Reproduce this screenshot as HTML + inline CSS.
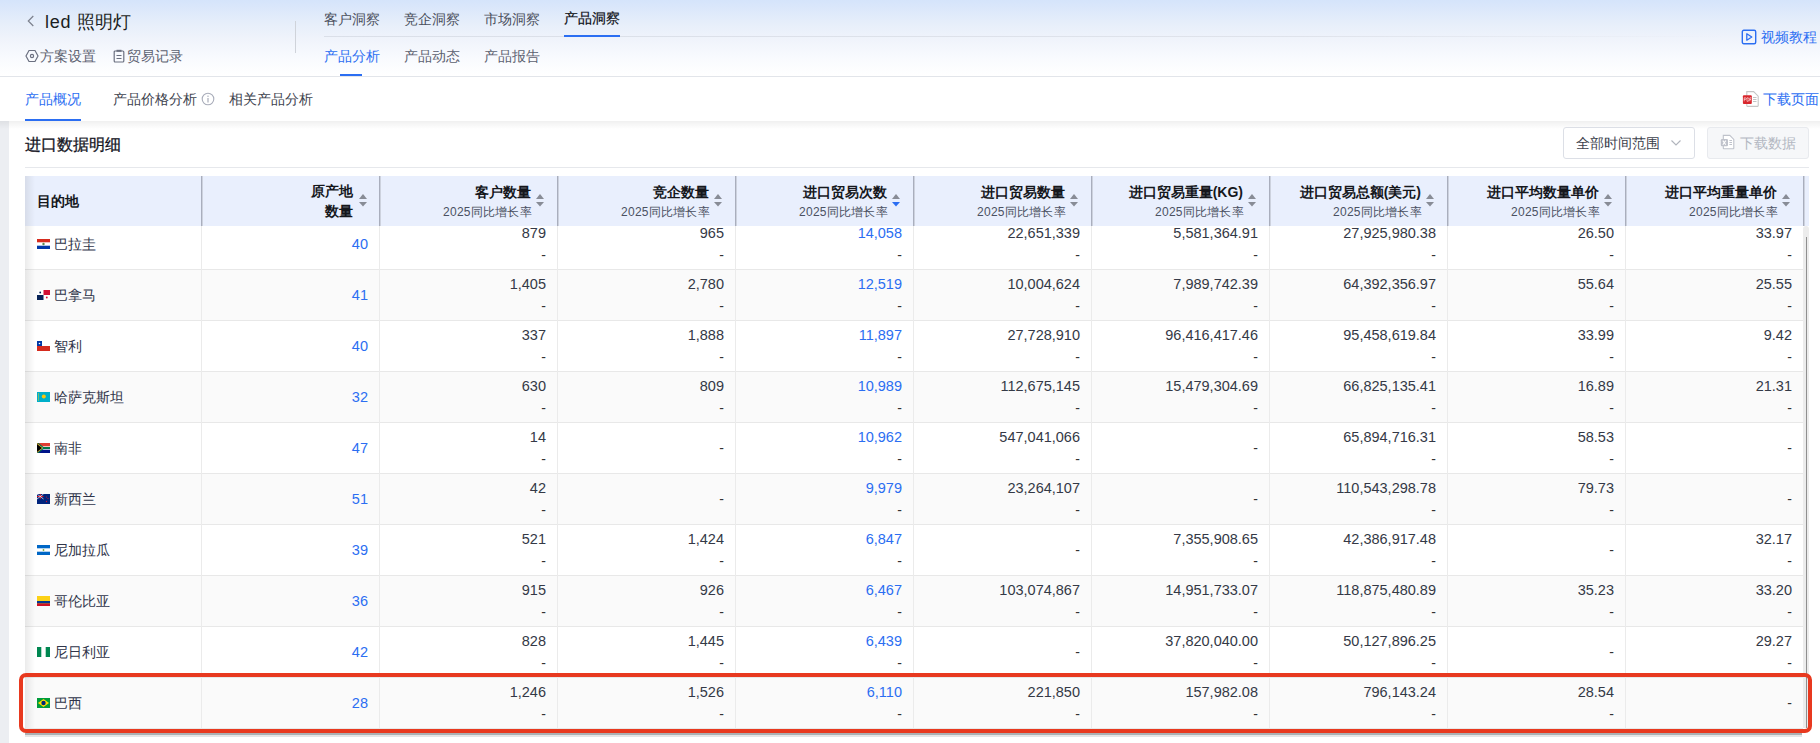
<!DOCTYPE html>
<html><head><meta charset="utf-8">
<style>
*{box-sizing:border-box;margin:0;padding:0}
html,body{width:1820px;height:743px;overflow:hidden;background:#fff}
body{font-family:"Liberation Sans",sans-serif;color:#333;position:relative}
.a{position:absolute;white-space:nowrap}
.hdr{position:absolute;left:0;top:0;width:1820px;height:77px;background:linear-gradient(180deg,#d5e4fb 0%,#e6eefa 30%,#eff3fb 50%,#f8fafe 75%,#ffffff 100%);border-bottom:1px solid #e2e5ea}
.t14{font-size:14px;line-height:16px}
.blue{color:#2b6ef2}
.tabs{position:absolute;left:0;top:77px;width:1820px;height:44px;background:#fff}
.grey{position:absolute;left:0;top:121px;width:1820px;height:622px;background:#eceef2}
.panel{position:absolute;left:9px;top:121px;width:1811px;height:622px;background:#fff}
.shadow{position:absolute;left:0;top:121px;width:1820px;height:8px;background:linear-gradient(180deg,rgba(0,0,0,.06),rgba(0,0,0,0))}
.th{position:absolute;top:176px;height:50px;background:#e9effd}
.thb{position:absolute;top:176px;width:2px;height:50px;background:linear-gradient(90deg,#a9aebd 0,#a9aebd 50%,#cdd2de 50%,#cdd2de 100%)}
.tt{font-size:14px;font-weight:bold;color:#15171c;line-height:16px}
.ts{font-size:12px;color:#4b5162;line-height:14px;letter-spacing:0.25px}
.num{font-size:14.5px;color:#343946;line-height:16px}
.dash{font-size:14px;color:#333;line-height:16px}
.row{position:absolute;left:25px;width:1778px;height:51px;border-bottom:1px solid #e8e8e8}
.vb{position:absolute;width:1px;background:#ebebeb}
</style></head><body>

<div class="hdr"></div>
<svg class="a" style="left:26px;top:15px" width="10" height="13" viewBox="0 0 10 13"><path d="M7.3 1L2.3 6L7.3 11" fill="none" stroke="#7c808d" stroke-width="1.2"/></svg>
<div class="a" style="left:45px;top:11px;font-size:18px;line-height:22px;color:#1b1d22"><span style="letter-spacing:0.7px">led </span>照明灯</div>
<svg class="a" style="left:25px;top:49px" width="14" height="14" viewBox="0 0 14 14"><path d="M4 1.5h6l3 5.5-3 5.5H4L1 7z" fill="none" stroke="#6b7080" stroke-width="1.2"/><circle cx="7" cy="7" r="1.6" fill="none" stroke="#6b7080" stroke-width="1.2"/></svg>
<div class="a t14" style="left:40px;top:48px;color:#5c6170">方案设置</div>
<svg class="a" style="left:113px;top:49px" width="12" height="14" viewBox="0 0 12 14"><rect x="1.2" y="2" width="9.6" height="11" rx="1" fill="none" stroke="#6b7080" stroke-width="1.2"/><rect x="3.5" y="0.8" width="5" height="2" fill="#6b7080"/><path d="M3.5 6.5h5M3.5 9.5h5" stroke="#6b7080" stroke-width="1.1"/></svg>
<div class="a t14" style="left:127px;top:48px;color:#5c6170">贸易记录</div>
<div class="a" style="left:295px;top:21px;width:1px;height:32px;background:#cfd3da"></div>
<div class="a t14" style="left:324px;top:11px;color:#4a4f5c">客户洞察</div>
<div class="a t14" style="left:404px;top:11px;color:#4a4f5c">竞企洞察</div>
<div class="a t14" style="left:484px;top:11px;color:#4a4f5c">市场洞察</div>
<div class="a t14" style="left:564px;top:10px;color:#0c0e14;-webkit-text-stroke:0.2px #0c0e14">产品洞察</div>
<div class="a" style="left:324px;top:36px;width:1400px;height:1px;background:linear-gradient(90deg,#dadfe8 0%,#dfe3eb 70%,rgba(223,227,235,0) 100%)"></div>
<div class="a" style="left:564px;top:35px;width:56px;height:2px;background:#2b6ef2"></div>
<div class="a t14" style="left:324px;top:48px;color:#2b6ef2">产品分析</div>
<div class="a t14" style="left:404px;top:48px;color:#5c6170">产品动态</div>
<div class="a t14" style="left:484px;top:48px;color:#5c6170">产品报告</div>
<div class="a" style="left:340px;top:74px;width:22px;height:2px;background:#2b6ef2"></div>
<svg class="a" style="left:1741px;top:29px" width="16" height="16" viewBox="0 0 16 16"><rect x="1.3" y="1.3" width="13.4" height="13.4" rx="1.5" fill="none" stroke="#2b6ef2" stroke-width="1.4"/><path d="M5.8 4.8v6.4l5-3.2z" fill="none" stroke="#2b6ef2" stroke-width="1.3" stroke-linejoin="round"/></svg>
<div class="a t14 blue" style="left:1761px;top:29px">视频教程</div>
<div class="tabs"></div>
<div class="a t14 blue" style="left:25px;top:91px">产品概况</div>
<div class="a" style="left:25px;top:119px;width:56px;height:2px;background:#2b6ef2"></div>
<div class="a t14" style="left:113px;top:91px;color:#3d424d">产品价格分析</div>
<svg class="a" style="left:201px;top:92px" width="14" height="14" viewBox="0 0 14 14"><circle cx="7" cy="7" r="5.8" fill="none" stroke="#a9adba" stroke-width="1.1"/><rect x="6.4" y="6" width="1.2" height="4.5" fill="#a9adba"/><rect x="6.4" y="3.6" width="1.2" height="1.3" fill="#a9adba"/></svg>
<div class="a t14" style="left:229px;top:91px;color:#3d424d">相关产品分析</div>
<svg class="a" style="left:1742px;top:90px" width="18" height="18" viewBox="0 0 18 18"><path d="M4.8 1.6h6.8l4.6 4.6v9.6q0 .6-.6.6H5.4q-.6 0-.6-.6z" fill="#fff" stroke="#c6c6c6" stroke-width="1.1"/><path d="M11 7.5h3.5M11 9.5h3.5M11 11.5h3.5" stroke="#bdbdbd" stroke-width=".9"/><rect x="0.9" y="5.3" width="8.9" height="8.6" rx="1" fill="#d8262c"/><path d="M2.2 11.3V7.8h1.2q.9 0 .9.8t-.9.8H2.2M5 11.3V7.8h.9q1.2 0 1.2 1.75T5.9 11.3z M7.9 11.3V7.8h1.3M7.9 9.5h1.1" fill="none" stroke="#fff" stroke-width=".6"/></svg>
<div class="a t14 blue" style="left:1763px;top:91px">下载页面</div>
<div class="grey"></div><div class="panel"></div><div class="shadow"></div>
<div class="a" style="left:25px;top:135px;font-size:16px;line-height:19px;color:#15161f;-webkit-text-stroke:0.3px #15161f">进口数据明细</div>
<div class="a" style="left:25px;top:167px;width:1784px;height:1px;background:#e6e8ec"></div>
<div class="a" style="left:1563px;top:127px;width:132px;height:32px;border:1px solid #dcdfe6;border-radius:3px;background:#fff"></div>
<div class="a t14" style="left:1576px;top:135px;color:#3d424d">全部时间范围</div>
<svg class="a" style="left:1670px;top:138px" width="12" height="9" viewBox="0 0 12 9"><path d="M1.5 2.5l4.5 4.5 4.5-4.5" fill="none" stroke="#b0b4bc" stroke-width="1.1"/></svg>
<div class="a" style="left:1707px;top:127px;width:102px;height:32px;border:1px solid #e8eaee;border-radius:3px;background:#f6f7f9"></div>
<svg class="a" style="left:1720px;top:134px" width="16" height="16" viewBox="0 0 16 16"><path d="M3.3 1.4h6.5l4 4v8.8q0 .5-.5.5H3.8q-.5 0-.5-.5z" fill="#fff" stroke="#bfc2cb" stroke-width="1.1"/><path d="M9.4 6.5h2.6M9.4 8.5h2.6M9.4 10.5h2.6" stroke="#bfc2cb" stroke-width="1"/><rect x="0.8" y="4.9" width="7.2" height="7.4" rx="1.3" fill="#bfc2cb"/><path d="M2.8 6.6l3 4.2M5.8 6.6l-3 4.2" stroke="#fff" stroke-width="1.1"/></svg>
<div class="a t14" style="left:1740px;top:135px;color:#b3b7c2">下载数据</div>
<div class="row" style="top:219px;background:#fff"></div>
<svg class="a" style="left:37px;top:239px" width="13" height="10" viewBox="0 0 13 10"><rect width="13" height="10" fill="#fff"/><rect width="13" height="3.3" fill="#d52b1e"/><rect y="6.7" width="13" height="3.3" fill="#0038a8"/><circle cx="6.5" cy="5" r="1.2" fill="#5a8a50"/></svg>
<div class="a t14" style="left:54px;top:236px;color:#30354a">巴拉圭</div>
<div class="a num" style="right:1452px;top:236px;color:#2b6ef2">40</div>
<div class="a num" style="right:1274px;top:225px;color:#343946">879</div>
<div class="a dash" style="right:1274px;top:247px">-</div>
<div class="a num" style="right:1096px;top:225px;color:#343946">965</div>
<div class="a dash" style="right:1096px;top:247px">-</div>
<div class="a num" style="right:918px;top:225px;color:#2b6ef2">14,058</div>
<div class="a dash" style="right:918px;top:247px">-</div>
<div class="a num" style="right:740px;top:225px;color:#343946">22,651,339</div>
<div class="a dash" style="right:740px;top:247px">-</div>
<div class="a num" style="right:562px;top:225px;color:#343946">5,581,364.91</div>
<div class="a dash" style="right:562px;top:247px">-</div>
<div class="a num" style="right:384px;top:225px;color:#343946">27,925,980.38</div>
<div class="a dash" style="right:384px;top:247px">-</div>
<div class="a num" style="right:206px;top:225px;color:#343946">26.50</div>
<div class="a dash" style="right:206px;top:247px">-</div>
<div class="a num" style="right:28px;top:225px;color:#343946">33.97</div>
<div class="a dash" style="right:28px;top:247px">-</div>
<div class="row" style="top:270px;background:#fafafa"></div>
<svg class="a" style="left:37px;top:290px" width="13" height="10" viewBox="0 0 13 10"><rect width="13" height="10" fill="#fff"/><rect x="6.5" width="6.5" height="5" fill="#d21034"/><rect y="5" width="6.5" height="5" fill="#072357"/><circle cx="3.2" cy="2.5" r="0.9" fill="#072357"/><circle cx="9.8" cy="7.5" r="0.9" fill="#d21034"/></svg>
<div class="a t14" style="left:54px;top:287px;color:#30354a">巴拿马</div>
<div class="a num" style="right:1452px;top:287px;color:#2b6ef2">41</div>
<div class="a num" style="right:1274px;top:276px;color:#343946">1,405</div>
<div class="a dash" style="right:1274px;top:298px">-</div>
<div class="a num" style="right:1096px;top:276px;color:#343946">2,780</div>
<div class="a dash" style="right:1096px;top:298px">-</div>
<div class="a num" style="right:918px;top:276px;color:#2b6ef2">12,519</div>
<div class="a dash" style="right:918px;top:298px">-</div>
<div class="a num" style="right:740px;top:276px;color:#343946">10,004,624</div>
<div class="a dash" style="right:740px;top:298px">-</div>
<div class="a num" style="right:562px;top:276px;color:#343946">7,989,742.39</div>
<div class="a dash" style="right:562px;top:298px">-</div>
<div class="a num" style="right:384px;top:276px;color:#343946">64,392,356.97</div>
<div class="a dash" style="right:384px;top:298px">-</div>
<div class="a num" style="right:206px;top:276px;color:#343946">55.64</div>
<div class="a dash" style="right:206px;top:298px">-</div>
<div class="a num" style="right:28px;top:276px;color:#343946">25.55</div>
<div class="a dash" style="right:28px;top:298px">-</div>
<div class="row" style="top:321px;background:#fff"></div>
<svg class="a" style="left:37px;top:341px" width="13" height="10" viewBox="0 0 13 10"><rect width="13" height="10" fill="#fff"/><rect y="5" width="13" height="5" fill="#d52b1e"/><rect width="5" height="5" fill="#0039a6"/><circle cx="2.5" cy="2.5" r="0.8" fill="#fff"/></svg>
<div class="a t14" style="left:54px;top:338px;color:#30354a">智利</div>
<div class="a num" style="right:1452px;top:338px;color:#2b6ef2">40</div>
<div class="a num" style="right:1274px;top:327px;color:#343946">337</div>
<div class="a dash" style="right:1274px;top:349px">-</div>
<div class="a num" style="right:1096px;top:327px;color:#343946">1,888</div>
<div class="a dash" style="right:1096px;top:349px">-</div>
<div class="a num" style="right:918px;top:327px;color:#2b6ef2">11,897</div>
<div class="a dash" style="right:918px;top:349px">-</div>
<div class="a num" style="right:740px;top:327px;color:#343946">27,728,910</div>
<div class="a dash" style="right:740px;top:349px">-</div>
<div class="a num" style="right:562px;top:327px;color:#343946">96,416,417.46</div>
<div class="a dash" style="right:562px;top:349px">-</div>
<div class="a num" style="right:384px;top:327px;color:#343946">95,458,619.84</div>
<div class="a dash" style="right:384px;top:349px">-</div>
<div class="a num" style="right:206px;top:327px;color:#343946">33.99</div>
<div class="a dash" style="right:206px;top:349px">-</div>
<div class="a num" style="right:28px;top:327px;color:#343946">9.42</div>
<div class="a dash" style="right:28px;top:349px">-</div>
<div class="row" style="top:372px;background:#fafafa"></div>
<svg class="a" style="left:37px;top:392px" width="13" height="10" viewBox="0 0 13 10"><rect width="13" height="10" fill="#00afca"/><circle cx="6.8" cy="4.5" r="2" fill="#fec50c"/><rect x="1" y="1" width="0.8" height="8" fill="#fec50c" opacity=".6"/></svg>
<div class="a t14" style="left:54px;top:389px;color:#30354a">哈萨克斯坦</div>
<div class="a num" style="right:1452px;top:389px;color:#2b6ef2">32</div>
<div class="a num" style="right:1274px;top:378px;color:#343946">630</div>
<div class="a dash" style="right:1274px;top:400px">-</div>
<div class="a num" style="right:1096px;top:378px;color:#343946">809</div>
<div class="a dash" style="right:1096px;top:400px">-</div>
<div class="a num" style="right:918px;top:378px;color:#2b6ef2">10,989</div>
<div class="a dash" style="right:918px;top:400px">-</div>
<div class="a num" style="right:740px;top:378px;color:#343946">112,675,145</div>
<div class="a dash" style="right:740px;top:400px">-</div>
<div class="a num" style="right:562px;top:378px;color:#343946">15,479,304.69</div>
<div class="a dash" style="right:562px;top:400px">-</div>
<div class="a num" style="right:384px;top:378px;color:#343946">66,825,135.41</div>
<div class="a dash" style="right:384px;top:400px">-</div>
<div class="a num" style="right:206px;top:378px;color:#343946">16.89</div>
<div class="a dash" style="right:206px;top:400px">-</div>
<div class="a num" style="right:28px;top:378px;color:#343946">21.31</div>
<div class="a dash" style="right:28px;top:400px">-</div>
<div class="row" style="top:423px;background:#fff"></div>
<svg class="a" style="left:37px;top:443px" width="13" height="10" viewBox="0 0 13 10"><rect width="13" height="10" fill="#fff"/><rect width="13" height="3.3" fill="#e03c31"/><rect y="6.7" width="13" height="3.3" fill="#001489"/><path d="M0 0 L6 5 L0 10Z" fill="#ffb81c"/><path d="M0 1 L5 5 L0 9Z" fill="#000"/><path d="M0 0 L1.5 0 L6.5 4 L13 4 L13 6 L6.5 6 L1.5 10 L0 10 L6 5Z" fill="#007749"/></svg>
<div class="a t14" style="left:54px;top:440px;color:#30354a">南非</div>
<div class="a num" style="right:1452px;top:440px;color:#2b6ef2">47</div>
<div class="a num" style="right:1274px;top:429px;color:#343946">14</div>
<div class="a dash" style="right:1274px;top:451px">-</div>
<div class="a dash" style="right:1096px;top:440px">-</div>
<div class="a num" style="right:918px;top:429px;color:#2b6ef2">10,962</div>
<div class="a dash" style="right:918px;top:451px">-</div>
<div class="a num" style="right:740px;top:429px;color:#343946">547,041,066</div>
<div class="a dash" style="right:740px;top:451px">-</div>
<div class="a dash" style="right:562px;top:440px">-</div>
<div class="a num" style="right:384px;top:429px;color:#343946">65,894,716.31</div>
<div class="a dash" style="right:384px;top:451px">-</div>
<div class="a num" style="right:206px;top:429px;color:#343946">58.53</div>
<div class="a dash" style="right:206px;top:451px">-</div>
<div class="a dash" style="right:28px;top:440px">-</div>
<div class="row" style="top:474px;background:#fafafa"></div>
<svg class="a" style="left:37px;top:494px" width="13" height="10" viewBox="0 0 13 10"><rect width="13" height="10" fill="#00247d"/><rect x="0" y="2" width="6.5" height="1" fill="#cf142b"/><rect x="2.8" y="0" width="1" height="5" fill="#cf142b"/><path d="M0 0L6.5 5M6.5 0L0 5" stroke="#fff" stroke-width=".7"/><circle cx="9.5" cy="3" r=".6" fill="#cf142b"/><circle cx="11" cy="4.5" r=".6" fill="#cf142b"/><circle cx="9.5" cy="7.5" r=".7" fill="#cf142b"/></svg>
<div class="a t14" style="left:54px;top:491px;color:#30354a">新西兰</div>
<div class="a num" style="right:1452px;top:491px;color:#2b6ef2">51</div>
<div class="a num" style="right:1274px;top:480px;color:#343946">42</div>
<div class="a dash" style="right:1274px;top:502px">-</div>
<div class="a dash" style="right:1096px;top:491px">-</div>
<div class="a num" style="right:918px;top:480px;color:#2b6ef2">9,979</div>
<div class="a dash" style="right:918px;top:502px">-</div>
<div class="a num" style="right:740px;top:480px;color:#343946">23,264,107</div>
<div class="a dash" style="right:740px;top:502px">-</div>
<div class="a dash" style="right:562px;top:491px">-</div>
<div class="a num" style="right:384px;top:480px;color:#343946">110,543,298.78</div>
<div class="a dash" style="right:384px;top:502px">-</div>
<div class="a num" style="right:206px;top:480px;color:#343946">79.73</div>
<div class="a dash" style="right:206px;top:502px">-</div>
<div class="a dash" style="right:28px;top:491px">-</div>
<div class="row" style="top:525px;background:#fff"></div>
<svg class="a" style="left:37px;top:545px" width="13" height="10" viewBox="0 0 13 10"><rect width="13" height="10" fill="#fff"/><rect width="13" height="3.3" fill="#0067c6"/><rect y="6.7" width="13" height="3.3" fill="#0067c6"/><circle cx="6.5" cy="5" r="0.9" fill="#7aa843"/></svg>
<div class="a t14" style="left:54px;top:542px;color:#30354a">尼加拉瓜</div>
<div class="a num" style="right:1452px;top:542px;color:#2b6ef2">39</div>
<div class="a num" style="right:1274px;top:531px;color:#343946">521</div>
<div class="a dash" style="right:1274px;top:553px">-</div>
<div class="a num" style="right:1096px;top:531px;color:#343946">1,424</div>
<div class="a dash" style="right:1096px;top:553px">-</div>
<div class="a num" style="right:918px;top:531px;color:#2b6ef2">6,847</div>
<div class="a dash" style="right:918px;top:553px">-</div>
<div class="a dash" style="right:740px;top:542px">-</div>
<div class="a num" style="right:562px;top:531px;color:#343946">7,355,908.65</div>
<div class="a dash" style="right:562px;top:553px">-</div>
<div class="a num" style="right:384px;top:531px;color:#343946">42,386,917.48</div>
<div class="a dash" style="right:384px;top:553px">-</div>
<div class="a dash" style="right:206px;top:542px">-</div>
<div class="a num" style="right:28px;top:531px;color:#343946">32.17</div>
<div class="a dash" style="right:28px;top:553px">-</div>
<div class="row" style="top:576px;background:#fafafa"></div>
<svg class="a" style="left:37px;top:596px" width="13" height="10" viewBox="0 0 13 10"><rect width="13" height="10" fill="#fcd116"/><rect y="5" width="13" height="2.5" fill="#003893"/><rect y="7.5" width="13" height="2.5" fill="#ce1126"/></svg>
<div class="a t14" style="left:54px;top:593px;color:#30354a">哥伦比亚</div>
<div class="a num" style="right:1452px;top:593px;color:#2b6ef2">36</div>
<div class="a num" style="right:1274px;top:582px;color:#343946">915</div>
<div class="a dash" style="right:1274px;top:604px">-</div>
<div class="a num" style="right:1096px;top:582px;color:#343946">926</div>
<div class="a dash" style="right:1096px;top:604px">-</div>
<div class="a num" style="right:918px;top:582px;color:#2b6ef2">6,467</div>
<div class="a dash" style="right:918px;top:604px">-</div>
<div class="a num" style="right:740px;top:582px;color:#343946">103,074,867</div>
<div class="a dash" style="right:740px;top:604px">-</div>
<div class="a num" style="right:562px;top:582px;color:#343946">14,951,733.07</div>
<div class="a dash" style="right:562px;top:604px">-</div>
<div class="a num" style="right:384px;top:582px;color:#343946">118,875,480.89</div>
<div class="a dash" style="right:384px;top:604px">-</div>
<div class="a num" style="right:206px;top:582px;color:#343946">35.23</div>
<div class="a dash" style="right:206px;top:604px">-</div>
<div class="a num" style="right:28px;top:582px;color:#343946">33.20</div>
<div class="a dash" style="right:28px;top:604px">-</div>
<div class="row" style="top:627px;background:#fff"></div>
<svg class="a" style="left:37px;top:647px" width="13" height="10" viewBox="0 0 13 10"><rect width="13" height="10" fill="#fff"/><rect width="4.3" height="10" fill="#008751"/><rect x="8.7" width="4.3" height="10" fill="#008751"/></svg>
<div class="a t14" style="left:54px;top:644px;color:#30354a">尼日利亚</div>
<div class="a num" style="right:1452px;top:644px;color:#2b6ef2">42</div>
<div class="a num" style="right:1274px;top:633px;color:#343946">828</div>
<div class="a dash" style="right:1274px;top:655px">-</div>
<div class="a num" style="right:1096px;top:633px;color:#343946">1,445</div>
<div class="a dash" style="right:1096px;top:655px">-</div>
<div class="a num" style="right:918px;top:633px;color:#2b6ef2">6,439</div>
<div class="a dash" style="right:918px;top:655px">-</div>
<div class="a dash" style="right:740px;top:644px">-</div>
<div class="a num" style="right:562px;top:633px;color:#343946">37,820,040.00</div>
<div class="a dash" style="right:562px;top:655px">-</div>
<div class="a num" style="right:384px;top:633px;color:#343946">50,127,896.25</div>
<div class="a dash" style="right:384px;top:655px">-</div>
<div class="a dash" style="right:206px;top:644px">-</div>
<div class="a num" style="right:28px;top:633px;color:#343946">29.27</div>
<div class="a dash" style="right:28px;top:655px">-</div>
<div class="row" style="top:678px;background:#fafafa"></div>
<svg class="a" style="left:37px;top:698px" width="13" height="10" viewBox="0 0 13 10"><rect width="13" height="10" fill="#009c3b"/><path d="M6.5 1L12 5L6.5 9L1 5Z" fill="#ffdf00"/><circle cx="6.5" cy="5" r="2.2" fill="#002776"/></svg>
<div class="a t14" style="left:54px;top:695px;color:#30354a">巴西</div>
<div class="a num" style="right:1452px;top:695px;color:#2b6ef2">28</div>
<div class="a num" style="right:1274px;top:684px;color:#343946">1,246</div>
<div class="a dash" style="right:1274px;top:706px">-</div>
<div class="a num" style="right:1096px;top:684px;color:#343946">1,526</div>
<div class="a dash" style="right:1096px;top:706px">-</div>
<div class="a num" style="right:918px;top:684px;color:#2b6ef2">6,110</div>
<div class="a dash" style="right:918px;top:706px">-</div>
<div class="a num" style="right:740px;top:684px;color:#343946">221,850</div>
<div class="a dash" style="right:740px;top:706px">-</div>
<div class="a num" style="right:562px;top:684px;color:#343946">157,982.08</div>
<div class="a dash" style="right:562px;top:706px">-</div>
<div class="a num" style="right:384px;top:684px;color:#343946">796,143.24</div>
<div class="a dash" style="right:384px;top:706px">-</div>
<div class="a num" style="right:206px;top:684px;color:#343946">28.54</div>
<div class="a dash" style="right:206px;top:706px">-</div>
<div class="a dash" style="right:28px;top:695px">-</div>
<div class="vb" style="left:201px;top:226px;height:502px"></div>
<div class="vb" style="left:379px;top:226px;height:502px"></div>
<div class="vb" style="left:557px;top:226px;height:502px"></div>
<div class="vb" style="left:735px;top:226px;height:502px"></div>
<div class="vb" style="left:913px;top:226px;height:502px"></div>
<div class="vb" style="left:1091px;top:226px;height:502px"></div>
<div class="vb" style="left:1269px;top:226px;height:502px"></div>
<div class="vb" style="left:1447px;top:226px;height:502px"></div>
<div class="vb" style="left:1625px;top:226px;height:502px"></div>
<div class="th" style="left:25px;width:1784px"></div>
<div class="a tt" style="left:37px;top:193px">目的地</div>
<div class="thb" style="left:201px"></div>
<div class="thb" style="left:379px"></div>
<div class="thb" style="left:557px"></div>
<div class="thb" style="left:735px"></div>
<div class="thb" style="left:913px"></div>
<div class="thb" style="left:1091px"></div>
<div class="thb" style="left:1269px"></div>
<div class="thb" style="left:1447px"></div>
<div class="thb" style="left:1625px"></div>
<div class="thb" style="left:1803px"></div>
<div class="a tt" style="right:1467px;top:183px;text-align:right">原产地</div>
<div class="a tt" style="right:1467px;top:203px;text-align:right">数量</div>
<svg class="a" style="left:359px;top:194px" width="8" height="13" viewBox="0 0 8 13"><path d="M4 0L8 5H0z" fill="#888c96"/><path d="M4 12.5L8 8H0z" fill="#888c96"/></svg>
<div class="a tt" style="right:1289px;top:184px">客户数量</div>
<div class="a ts" style="right:1288px;top:205px">2025同比增长率</div>
<svg class="a" style="left:536px;top:194px" width="8" height="13" viewBox="0 0 8 13"><path d="M4 0L8 5H0z" fill="#888c96"/><path d="M4 12.5L8 8H0z" fill="#888c96"/></svg>
<div class="a tt" style="right:1111px;top:184px">竞企数量</div>
<div class="a ts" style="right:1110px;top:205px">2025同比增长率</div>
<svg class="a" style="left:714px;top:194px" width="8" height="13" viewBox="0 0 8 13"><path d="M4 0L8 5H0z" fill="#888c96"/><path d="M4 12.5L8 8H0z" fill="#888c96"/></svg>
<div class="a tt" style="right:933px;top:184px">进口贸易次数</div>
<div class="a ts" style="right:932px;top:205px">2025同比增长率</div>
<svg class="a" style="left:892px;top:194px" width="8" height="13" viewBox="0 0 8 13"><path d="M4 0L8 5H0z" fill="#888c96"/><path d="M4 12.5L8 8H0z" fill="#2b6ef2"/></svg>
<div class="a tt" style="right:755px;top:184px">进口贸易数量</div>
<div class="a ts" style="right:754px;top:205px">2025同比增长率</div>
<svg class="a" style="left:1070px;top:194px" width="8" height="13" viewBox="0 0 8 13"><path d="M4 0L8 5H0z" fill="#888c96"/><path d="M4 12.5L8 8H0z" fill="#888c96"/></svg>
<div class="a tt" style="right:577px;top:184px">进口贸易重量(KG)</div>
<div class="a ts" style="right:576px;top:205px">2025同比增长率</div>
<svg class="a" style="left:1248px;top:194px" width="8" height="13" viewBox="0 0 8 13"><path d="M4 0L8 5H0z" fill="#888c96"/><path d="M4 12.5L8 8H0z" fill="#888c96"/></svg>
<div class="a tt" style="right:399px;top:184px">进口贸易总额(美元)</div>
<div class="a ts" style="right:398px;top:205px">2025同比增长率</div>
<svg class="a" style="left:1426px;top:194px" width="8" height="13" viewBox="0 0 8 13"><path d="M4 0L8 5H0z" fill="#888c96"/><path d="M4 12.5L8 8H0z" fill="#888c96"/></svg>
<div class="a tt" style="right:221px;top:184px">进口平均数量单价</div>
<div class="a ts" style="right:220px;top:205px">2025同比增长率</div>
<svg class="a" style="left:1604px;top:194px" width="8" height="13" viewBox="0 0 8 13"><path d="M4 0L8 5H0z" fill="#888c96"/><path d="M4 12.5L8 8H0z" fill="#888c96"/></svg>
<div class="a tt" style="right:43px;top:184px">进口平均重量单价</div>
<div class="a ts" style="right:42px;top:205px">2025同比增长率</div>
<svg class="a" style="left:1782px;top:194px" width="8" height="13" viewBox="0 0 8 13"><path d="M4 0L8 5H0z" fill="#888c96"/><path d="M4 12.5L8 8H0z" fill="#888c96"/></svg>
<div class="a" style="left:25px;top:176px;width:10px;height:552px;background:linear-gradient(90deg,rgba(0,0,0,.08),rgba(0,0,0,0))"></div>
<div class="a" style="left:25px;top:733px;width:1777px;height:2px;background:#abb0b3"></div>
<div class="a" style="left:25px;top:735px;width:1777px;height:2px;background:#e4e5e6"></div>
<div class="a" style="left:1803px;top:226px;width:6px;height:502px;background:#ececec;border-radius:3px 3px 0 0"></div>
<div class="a" style="left:1806px;top:237px;width:1px;height:491px;background:#8f8f8f"></div>
<div class="a" style="left:19px;top:673px;width:1793px;height:60px;border:4px solid #e8391f;border-radius:7px"></div>
</body></html>
